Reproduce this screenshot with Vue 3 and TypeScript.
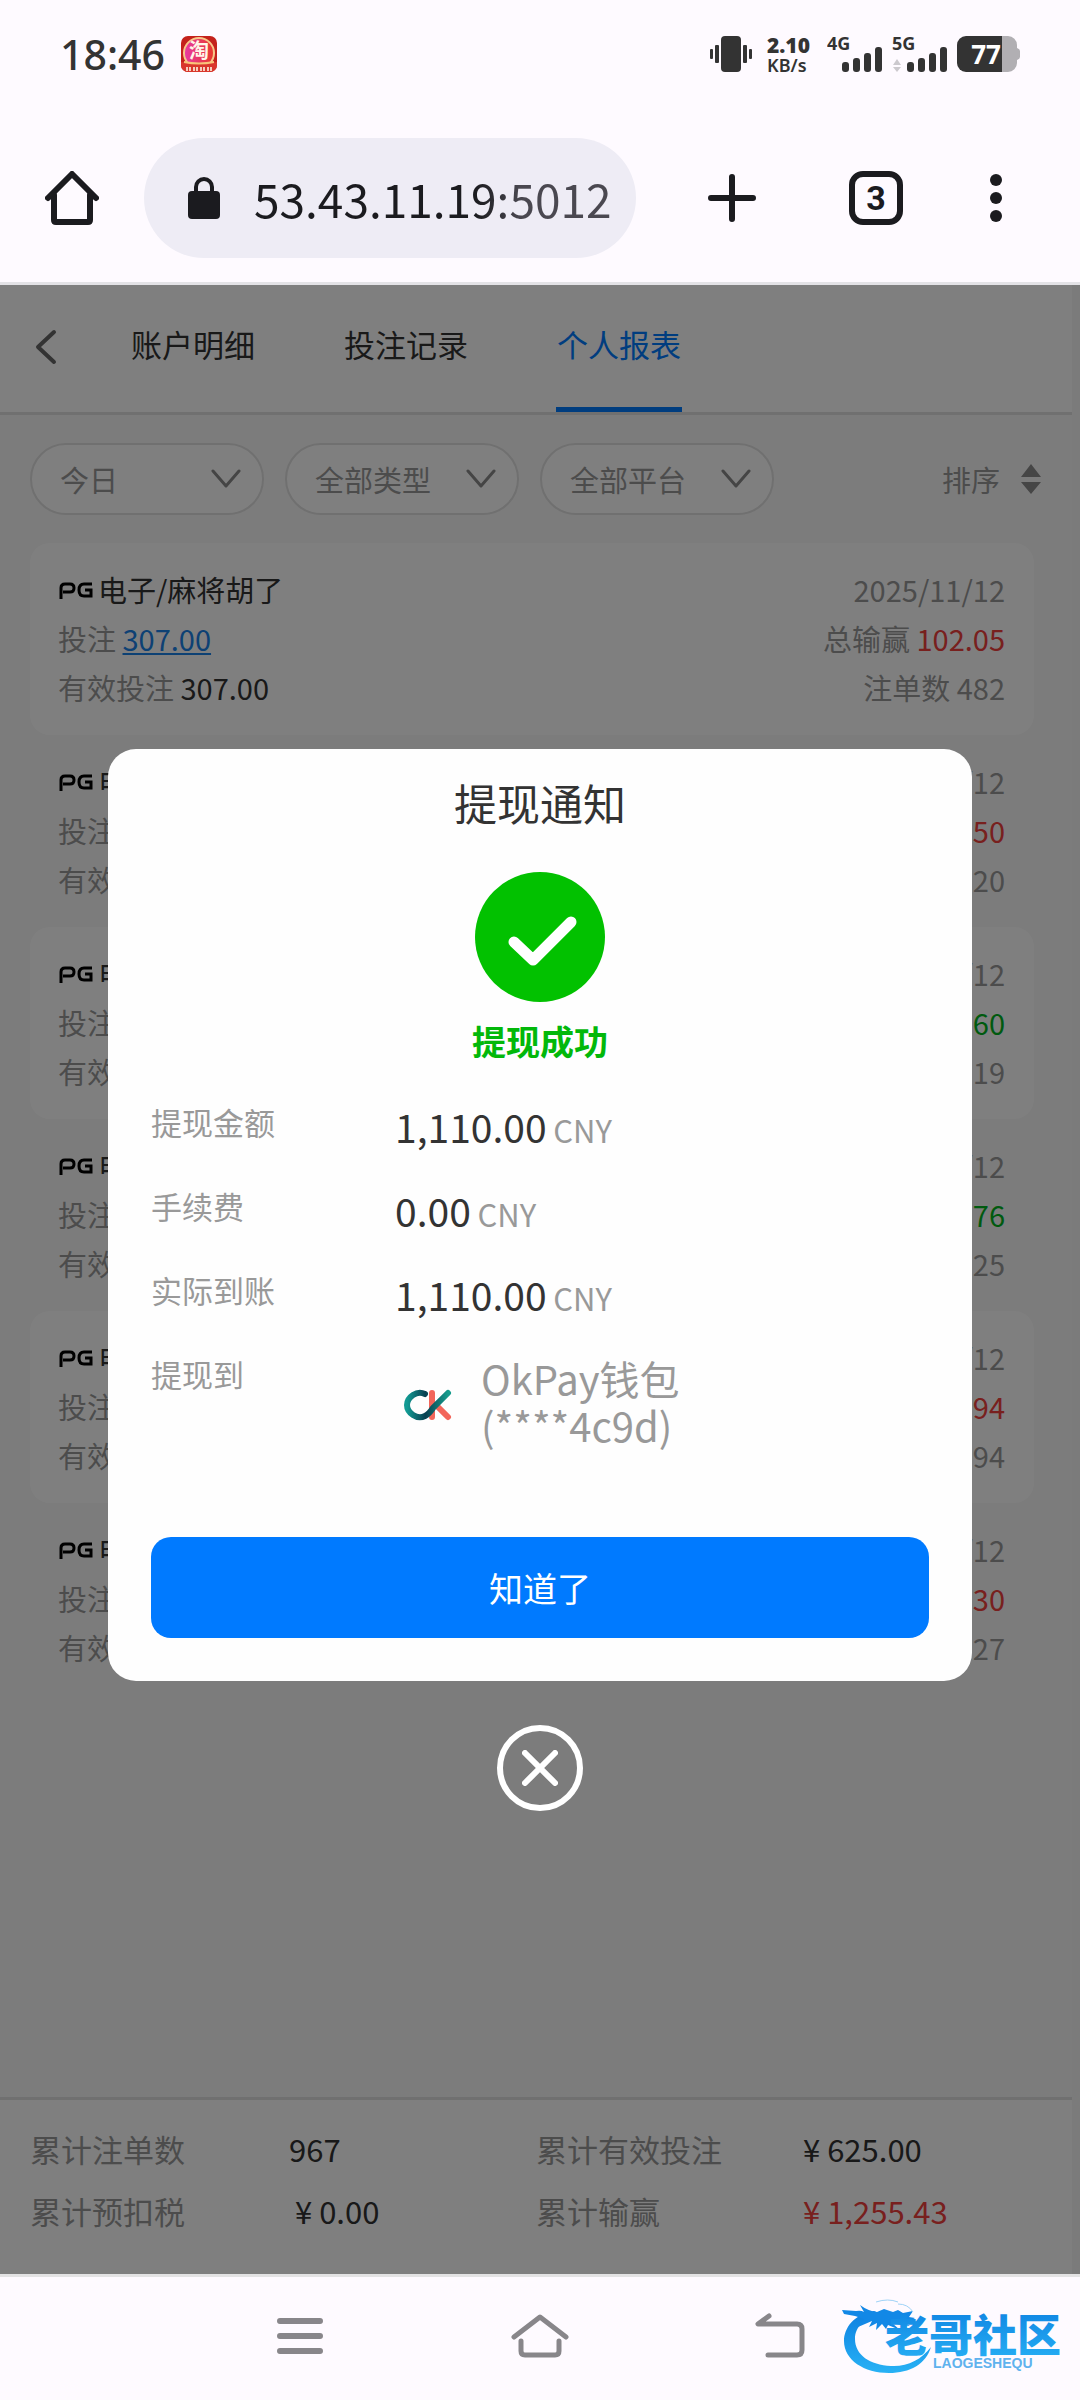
<script setup lang="ts">
import { ref } from 'vue'

interface BetRecord {
  game: string
  date: string
  bet: string
  result: string
  win: boolean
  count: number
}

const address = ref('53.43.11.19:5012')
const tabs = ['账户明细', '投注记录', '个人报表']
const activeTab = ref(2)

const filters = [
  { label: '日期', options: ['今日', '昨日', '近7日'] },
  { label: '类型', options: ['全部类型', '电子', '真人'] },
  { label: '平台', options: ['全部平台', 'PG'] }
]

const records: BetRecord[] = [
  { game: '电子/麻将胡了', date: '2025/11/12', bet: '307.00', result: '102.05', win: true, count: 482 },
  { game: '电子/麻将胡了', date: '2025/11/12', bet: '80.00', result: '450.50', win: true, count: 120 },
  { game: '电子/麻将胡了', date: '2025/11/12', bet: '60.00', result: '-12.60', win: false, count: 119 },
  { game: '电子/麻将胡了', date: '2025/11/12', bet: '48.00', result: '-8.76', win: false, count: 25 },
  { game: '电子/麻将胡了', date: '2025/11/12', bet: '70.00', result: '493.94', win: true, count: 94 },
  { game: '电子/麻将胡了', date: '2025/11/12', bet: '60.00', result: '230.30', win: true, count: 127 }
]

const amounts = [
  { label: '提现金额', value: '1,110.00' },
  { label: '手续费', value: '0.00' },
  { label: '实际到账', value: '1,110.00' }
]
</script>

<template>
  <div class="screen">
    <header class="chrome">
      <div class="status">
        <span class="clock">18:46</span>
        <svg class="app-badge" width="36" height="36" viewBox="0 0 36 36">
          <defs>
            <linearGradient id="badge" x1="0" x2="1">
              <stop offset="0" stop-color="#e83aa0" />
              <stop offset="1" stop-color="#e8382c" />
            </linearGradient>
          </defs>
          <rect width="36" height="36" rx="7" fill="#c4211b" />
          <circle cx="18" cy="17" r="16" fill="#f7c889" />
          <circle cx="18" cy="17" r="14" fill="url(#badge)" />
          <path d="M0 26q18 3 36 0v3a7 7 0 0 1-7 7H7a7 7 0 0 1-7-7z" fill="#d9362c" />
          <path d="M3 26q15 3 30 0" stroke="#f8c47a" stroke-width="2" fill="none" />
          <text x="18" y="22" text-anchor="middle" font-size="20" font-weight="700" fill="#fff5e8">淘</text>
          <path d="M5 33h5M12 33h5M19 33h5M26 33h5" stroke="#f6cdbd" stroke-width="4" stroke-dasharray="2 1" />
        </svg>
        <div class="status-right">
          <svg width="44" height="36" viewBox="0 0 44 36" fill="#333">
            <rect x="12" width="20" height="36" rx="4" />
            <rect x="6" y="9" width="4" height="18" rx="1" />
            <rect x="1" y="13" width="3" height="10" rx="1" />
            <rect x="34" y="9" width="4" height="18" rx="1" />
            <rect x="40" y="13" width="3" height="10" rx="1" />
          </svg>
          <div class="speed"><b>2.10</b><span>KB/s</span></div>
          <svg class="signal" width="56" height="52" viewBox="0 -8 56 52" fill="#333">
            <text x="0" y="14">4G</text>
            <rect x="15" y="26" width="7" height="10" rx="3" />
            <rect x="26" y="22" width="7" height="14" rx="3" />
            <rect x="37" y="17" width="7" height="19" rx="3" />
            <rect x="48" y="11" width="7" height="25" rx="3" />
          </svg>
          <svg class="signal" width="56" height="52" viewBox="0 -8 56 52" fill="#333">
            <text x="0" y="14">5G</text>
            <path d="M1 29l4-6 4 6zM1 31l4 5 4-5z" fill="#ccc9ce" />
            <rect x="15" y="26" width="7" height="10" rx="3" />
            <rect x="26" y="22" width="7" height="14" rx="3" />
            <rect x="37" y="17" width="7" height="19" rx="3" />
            <rect x="48" y="11" width="7" height="25" rx="3" />
          </svg>
          <svg class="battery" width="63" height="36" viewBox="0 0 63 36">
            <path d="M45 0h6a9 9 0 0 1 9 9v3q3 1 3 3v6q0 2-3 3v3a9 9 0 0 1-9 9h-6z" fill="#b1afb3" />
            <path d="M45 0H9a9 9 0 0 0-9 9v18a9 9 0 0 0 9 9h36z" fill="#333" />
            <text x="29" y="28" text-anchor="middle" fill="#fff">77</text>
          </svg>
        </div>
      </div>
      <div class="toolbar">
        <button class="icon home" aria-label="主页">
          <svg width="54" height="54" viewBox="0 0 54 54" fill="none" stroke="#1b1b1f" stroke-width="6" stroke-linecap="round" stroke-linejoin="round">
            <path d="M3 27L27 3l24 24" />
            <path d="M9 24v25q0 2 2 2h32q2 0 2-2V24" />
          </svg>
        </button>
        <div class="omnibox">
          <svg width="32" height="42" viewBox="0 0 32 42">
            <rect y="14" width="32" height="28" rx="4" fill="#1b1b1f" />
            <path d="M8 15v-5a8 8 0 0 1 16 0v5" fill="none" stroke="#1b1b1f" stroke-width="4" />
          </svg>
          <input v-model="address" aria-label="网址" type="text" />
        </div>
        <button class="icon plus" aria-label="新标签页">
          <svg width="48" height="48" viewBox="0 0 48 48" stroke="#1b1b1f" stroke-width="6" stroke-linecap="round">
            <path d="M24 3v42M3 24h42" />
          </svg>
        </button>
        <button class="tab-count" aria-label="标签页">3</button>
        <button class="icon" aria-label="菜单">
          <svg width="12" height="54" viewBox="0 0 12 54" fill="#1b1b1f">
            <circle cx="6" cy="9" r="6" />
            <circle cx="6" cy="27" r="6" />
            <circle cx="6" cy="45" r="6" />
          </svg>
        </button>
      </div>
    </header>

    <main class="viewport">
      <div class="app">
        <nav class="tabs">
          <button class="icon back" aria-label="返回">
            <svg width="22" height="36" viewBox="0 0 22 36" fill="none" stroke="#666" stroke-width="4" stroke-linecap="round" stroke-linejoin="round">
              <path d="M19 3L3 18l16 15" />
            </svg>
          </button>
          <button
            v-for="(tab, i) in tabs"
            :key="tab"
            class="tab"
            :class="{ active: i === activeTab }"
            @click="activeTab = i"
          >{{ tab }}</button>
        </nav>

        <div class="filters">
          <div v-for="f in filters" :key="f.label" class="filter">
            <select :aria-label="f.label">
              <option v-for="o in f.options" :key="o">{{ o }}</option>
            </select>
            <svg width="32" height="20" viewBox="0 0 32 20" fill="none" stroke="#8a8a8a" stroke-width="3" stroke-linecap="round" stroke-linejoin="round">
              <path d="M3 2l13 15L29 2" />
            </svg>
          </div>
          <button class="sort">
            排序
            <svg width="20" height="30" viewBox="0 0 20 30" fill="#8c8c8c">
              <path d="M0 13L10 0l10 13zM0 18l10 12 10-12z" />
            </svg>
          </button>
        </div>

        <ul class="records">
          <li v-for="(r, i) in records" :key="i" class="record">
            <div class="line">
              <span class="game">
                <svg width="36" height="18" viewBox="0 0 36 18" fill="none" stroke="#000" stroke-width="3">
                  <path d="M3 18V7q0-4 4-4h5q4 0 4 4t-4 4H5" />
                  <path d="M34 3h-8q-5 0-5 6t5 6h7v-6h-6" />
                </svg>
                {{ r.game }}
              </span>
              <span>{{ r.date }}</span>
            </div>
            <div class="line">
              <span>投注 <a href="#bets">{{ r.bet }}</a></span>
              <span>总输赢 <em :class="r.win ? 'red' : 'green'">{{ r.result }}</em></span>
            </div>
            <div class="line">
              <span>有效投注 <em class="dark">{{ r.bet }}</em></span>
              <span>注单数 {{ r.count }}</span>
            </div>
          </li>
        </ul>

        <dl class="totals">
          <dt>累计注单数</dt><dd>967</dd>
          <dt>累计有效投注</dt><dd>¥ 625.00</dd>
          <dt>累计预扣税</dt><dd class="tax">¥ 0.00</dd>
          <dt>累计输赢</dt><dd class="red">¥ 1,255.43</dd>
        </dl>
      </div>

      <div class="overlay">
        <section class="modal" role="dialog" aria-labelledby="notice-title">
          <h2 id="notice-title">提现通知</h2>
          <svg class="check" width="130" height="130" viewBox="0 0 130 130">
            <circle cx="65" cy="65" r="65" fill="#02c100" />
            <path d="M39 70l19 18 38-38" fill="none" stroke="#fff" stroke-width="11" stroke-linecap="round" stroke-linejoin="round" />
          </svg>
          <p class="success">提现成功</p>
          <dl class="details">
            <template v-for="a in amounts" :key="a.label">
              <dt>{{ a.label }}</dt>
              <dd>{{ a.value }} <small>CNY</small></dd>
            </template>
            <dt>提现到</dt>
            <dd class="wallet">
              <svg width="48" height="38" viewBox="0 -6 48 38" fill="none" stroke-width="6" stroke-linecap="round">
                <defs>
                  <linearGradient id="teal" x1="0" x2="1">
                    <stop offset="0" stop-color="#129a93" />
                    <stop offset=".45" stop-color="#083f50" />
                    <stop offset="1" stop-color="#169c8d" />
                  </linearGradient>
                </defs>
                <path d="M28 4v24M32 16l12 12" stroke="#f2665b" />
                <path d="M21 5Q15 2 9 6Q3 10 3 16Q3 22 9 26Q15 30 21 27Q25 25 29 19L44 4" stroke="url(#teal)" />
              </svg>
              <span>OkPay钱包<br />(****4c9d)</span>
            </dd>
          </dl>
          <button class="confirm">知道了</button>
        </section>
        <button class="close" aria-label="关闭">
          <svg width="36" height="36" viewBox="0 0 36 36" stroke="#fff" stroke-width="6" stroke-linecap="round">
            <path d="M3 3l30 30M33 3L3 33" />
          </svg>
        </button>
      </div>
    </main>

    <nav class="system-nav">
      <button class="icon" aria-label="最近任务">
        <svg width="46" height="46" viewBox="0 0 46 46" stroke="#88868a" stroke-width="6" stroke-linecap="round">
          <path d="M3 8h40M3 23h40M3 38h40" />
        </svg>
      </button>
      <button class="icon" aria-label="桌面">
        <svg width="58" height="46" viewBox="0 0 58 46" fill="none" stroke="#88868a" stroke-width="5" stroke-linecap="round" stroke-linejoin="round">
          <path d="M3 24L29 4l26 20" />
          <path d="M10 28v10q0 4 4 4h30q4 0 4-4V28" />
        </svg>
      </button>
      <button class="icon" aria-label="返回上一页">
        <svg width="50" height="46" viewBox="0 0 50 46" fill="none" stroke="#88868a" stroke-width="5" stroke-linecap="round" stroke-linejoin="round">
          <path d="M14 3L3 11h39q5 0 5 5v21q0 5-5 5H13" />
        </svg>
      </button>
      <svg class="brand" width="226" height="78" viewBox="0 0 226 78">
        <defs>
          <linearGradient id="brand" x1="0" y1="0" x2="0" y2="1">
            <stop offset="0" stop-color="#0d7fe0" />
            <stop offset="1" stop-color="#28b2f5" />
          </linearGradient>
        </defs>
        <path d="M32 13C12 16 2 30 2 43C2 62 22 75 47 75C68 75 84 66 89 49C79 62 65 69 49 68C28 67 13 57 13 41C13 29 22 19 42 17Z" fill="url(#brand)" />
        <path d="M0 12l14 1q5-1 8 1l-4-7q8 6 17 7l7-3 9 3 5-2 5 3 10-2-4 6 6 1-5 3-10-1 10 6-9-1-9-2 8 7-12-5-2 4-4-5-6 6 1-7-8 4 3-6-14 6 6-8-9-3-11-2z" fill="#1288e6" />
        <path d="M34 4q12-4 22 0M56 6q10 0 15 8" stroke="#9fd3f7" stroke-width="1" fill="none" />
        <text class="brand-name" x="43" y="54" fill="url(#brand)">老哥社区</text>
        <text class="brand-sub" x="91" y="70" fill="#5fb2ee">LAOGESHEQU</text>
      </svg>
    </nav>
  </div>
</template>

<style>
body {
  margin: 0;
}
</style>

<style scoped>
.screen {
  display: flex;
  flex-direction: column;
  min-height: 100vh;
  background: #fefaff;
  font-family: "Noto Sans CJK SC", sans-serif;
}
.screen * {
  box-sizing: border-box;
}
button,
select,
input {
  font: inherit;
  color: inherit;
  border: 0;
  padding: 0;
  margin: 0;
  background: none;
}
svg {
  display: block;
  flex: none;
}
dl, dd, ul, h2, p {
  margin: 0;
  padding: 0;
}
em {
  font-style: normal;
}

.chrome {
  border-bottom: 3px solid #e3e2e6;
}
.status {
  display: flex;
  align-items: center;
  height: 108px;
  padding: 0 60px;
  color: #333;
}
.clock {
  margin-right: 16px;
  font: 500 41px/60px "Noto Sans", sans-serif;
}
.status-right {
  display: flex;
  align-items: center;
  gap: 9px;
  margin-left: auto;
}
.speed {
  display: flex;
  flex-direction: column;
  width: 56px;
  padding-left: 5px;
  font: 600 18px/18px "Noto Sans", sans-serif;
}
.speed b {
  font-size: 21px;
  line-height: 22px;
}
.signal {
  font: 700 18px "Noto Sans", sans-serif;
}
.battery {
  font: 700 26px "Noto Sans", sans-serif;
}
.toolbar {
  display: flex;
  align-items: center;
  height: 174px;
  padding: 6px 78px 0 45px;
}
.omnibox {
  display: flex;
  flex: 1;
  align-items: center;
  gap: 34px;
  height: 120px;
  margin: 0 72px 0 45px;
  padding: 0 26px 0 44px;
  border-radius: 60px;
  background: #eeecf5;
  min-width: 0;
}
.omnibox input {
  flex: 1;
  min-width: 0;
  width: 100%;
  height: 80px;
  font-size: 46px;
  color: transparent;
  background: linear-gradient(90deg, #1b1b1f 62%, #4a4850 75%);
  -webkit-background-clip: text;
  background-clip: text;
}
.tab-count {
  width: 54px;
  height: 54px;
  margin: 0 87px 0 93px;
  border: 6px solid #1b1b1f;
  border-radius: 14px;
  color: #1b1b1f;
  font: 700 34px/40px Roboto, sans-serif;
}

.viewport {
  position: relative;
  display: flex;
  flex: 1;
  padding-right: 8px;
  background: #f6f6f6;
}
.app {
  display: flex;
  flex: 1;
  flex-direction: column;
  background: #f8f8f8;
}
.tabs {
  display: flex;
  gap: 87px;
  height: 130px;
  border-bottom: 3px solid #e0e0e0;
  background: #fff;
  font-size: 31px;
}
.back {
  width: 22px;
  margin: 0 -14px 0 35px;
  padding-bottom: 3px;
}
.tab {
  width: 126px;
  padding-bottom: 4px;
  border-bottom: 5px solid transparent;
  color: #333;
  line-height: 48px;
  white-space: nowrap;
}
.tab.active {
  border-bottom-color: #007aff;
  color: #007aff;
}
.filters {
  display: flex;
  gap: 21px;
  padding: 28px 31px 28px 30px;
  color: #999;
  font-size: 29px;
}
.filter {
  position: relative;
  width: 234px;
  height: 72px;
}
.filter select {
  width: 100%;
  height: 100%;
  padding: 0 28px;
  border: 2px solid #e0e0e0;
  border-radius: 36px;
  background: #fff;
  appearance: none;
}
.filter svg {
  position: absolute;
  top: 26px;
  right: 22px;
  pointer-events: none;
}
.sort {
  display: flex;
  align-items: center;
  gap: 21px;
  margin-left: auto;
}
.records {
  padding: 0 38px 0 30px;
  list-style: none;
}
.record {
  height: 192px;
  padding: 22px 29px 23px 28px;
  border-radius: 20px;
  color: #999;
  font-size: 29px;
  line-height: 49px;
}
.record:nth-child(odd) {
  background: #fff;
}
.line {
  display: flex;
  justify-content: space-between;
}
.game {
  display: flex;
  align-items: center;
  gap: 4px;
  color: #333;
}
.line a {
  color: #1a82e8;
}
.dark {
  color: #333;
}
.red {
  color: #f0403c;
}
.green {
  color: #00b41e;
}
.totals {
  display: grid;
  grid-template-columns: 259px 247px 267px 1fr;
  margin-top: auto;
  padding: 18px 30px 32px;
  border-top: 3px solid #e0e0e0;
  background: #fff;
  color: #999;
  font-size: 31px;
  line-height: 62px;
}
.totals dd {
  color: #333;
}
.totals .tax {
  padding-left: 6px;
}
.totals .red {
  color: #f0403c;
}

.overlay {
  position: absolute;
  inset: 0;
  display: flex;
  flex-direction: column;
  align-items: center;
  justify-content: center;
  gap: 44px;
  background: rgba(0, 0, 0, 0.5);
}
.modal {
  display: flex;
  flex-direction: column;
  align-items: center;
  width: 80%;
  padding: 23px 43px 43px;
  border-radius: 28px;
  background: #fefefe;
  color: #333;
}
.modal h2 {
  font-size: 43px;
  font-weight: 400;
  line-height: 60px;
}
.check {
  margin-top: 40px;
}
.success {
  margin-top: 15px;
  color: #02b80a;
  font-size: 34px;
  font-weight: 700;
  line-height: 48px;
}
.details {
  display: grid;
  grid-template-columns: 244px 1fr;
  grid-auto-rows: minmax(84px, auto);
  width: 100%;
  margin-top: 33px;
  color: #999;
  font-size: 31px;
  line-height: 48px;
}
.details dd {
  color: #333;
  font-size: 39px;
  line-height: 56px;
}
.details small {
  margin-left: -2px;
  color: #999;
  font-size: 31px;
}
.details .wallet {
  display: flex;
  align-items: center;
  gap: 29px;
  padding: 5px 0 0 9px;
  color: #999;
  font-size: 40px;
  line-height: 47px;
}
.confirm {
  width: 100%;
  height: 101px;
  margin-top: 88px;
  border-radius: 20px;
  background: #007aff;
  color: #fff;
  font-size: 34px;
}
.close {
  display: flex;
  align-items: center;
  justify-content: center;
  width: 86px;
  height: 86px;
  border: 6px solid #fff;
  border-radius: 50%;
}

.system-nav {
  position: relative;
  display: flex;
  justify-content: center;
  height: 126px;
  border-top: 3px solid #e3e2e3;
}
.system-nav .icon {
  display: flex;
  align-items: center;
  justify-content: center;
  width: 240px;
  padding-bottom: 6px;
}
.brand {
  position: absolute;
  right: 12px;
  bottom: 24px;
}
.brand-name {
  font-size: 44px;
  font-weight: 900;
}
.brand-sub {
  font: 700 14px "Liberation Sans", sans-serif;
}
</style>
